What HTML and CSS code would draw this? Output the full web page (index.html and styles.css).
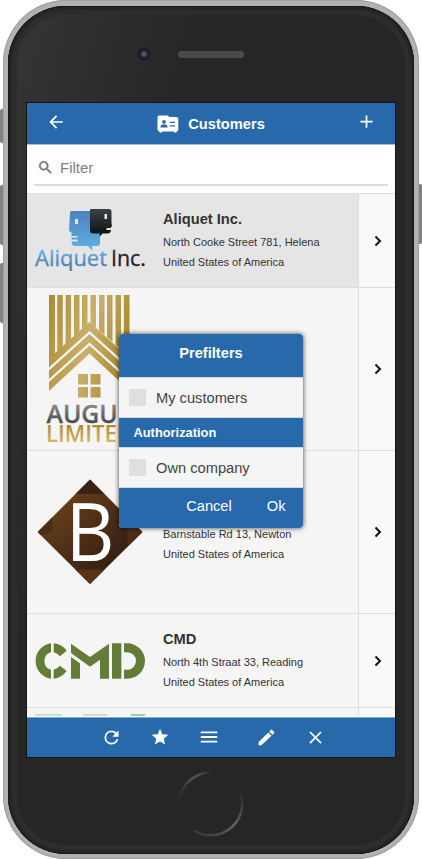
FILE: index.html
```html
<!DOCTYPE html>
<html lang="en">
<head>
<meta charset="utf-8">
<title>Customers</title>
<link rel="stylesheet" href="styles.css">
</head>
<body>
<div class="device">
  <i class="side mute"></i><i class="side vol-up"></i><i class="side vol-down"></i><i class="side power"></i>
  <div class="shell">
    <div class="face">
      <div class="top-bezel"><span class="camera"></span><span class="speaker"></span></div>
      <main class="screen">
        <header class="bar">
          <svg class="back" width="20" height="20" viewBox="0 0 24 24"><path d="M20 11H7.830l5.590-5.590L12 4l-8 8 8 8 1.410-1.410L7.830 13H20v-2z"/></svg>
          <h1>
            <svg width="22" height="18" viewBox="0 0 22 18"><path fill-rule="evenodd" d="M2 .5h8.500a1.500 1.500 0 0 1 1.500 1.500h7.500a1.800 1.800 0 0 1 1.800 1.800V14.500a2 2 0 0 1-1.500 2l-.6 1h-2l-.7-1H5.500l-.7 1h-2l-.6-1A2 2 0 0 1 .5 14.500V2A1.500 1.500 0 0 1 2 .5zM7 5a1.900 1.900 0 1 0 .01 0zM3.500 12.400h7v-1c0-1.400-2-2.100-3.500-2.100s-3.500.7-3.500 2.100zM13 6.800V8h5V6.800zM13 10.300v1.200h5v-1.200z"/></svg>
            Customers
          </h1>
          <svg class="add" width="21" height="21" viewBox="0 0 24 24"><path d="M19 13h-6v6h-2v-6H5v-2h6V5h2v6h6v2z"/></svg>
        </header>
        <div class="search">
          <div class="field">
            <svg width="17" height="17" viewBox="0 0 24 24"><path d="M15.500 14h-.79l-.28-.27A6.470 6.470 0 0 0 16 9.500 6.500 6.500 0 1 0 9.500 16c1.610 0 3.090-.59 4.230-1.570l.27.28v.79l5 4.990L20.490 19l-4.990-5zm-6 0C7.010 14 5 11.990 5 9.500S7.010 5 9.500 5 14 7.010 14 9.500 11.990 14 9.500 14z"/></svg>
            <span>Filter</span>
          </div>
        </div>
        <section class="list">
          <article class="row small selected">
            <div class="logo lifted">
              <svg width="112" height="66" viewBox="0 0 112 66">
                <defs>
                  <linearGradient id="sky" x1="0" y1="0" x2="0" y2="1"><stop offset="0" stop-color="#4d82bb"/><stop offset="1" stop-color="#5fb1e6"/></linearGradient>
                  <linearGradient id="word" x1="0" y1="0" x2="0" y2="1"><stop offset=".2" stop-color="#68b9ed"/><stop offset=".85" stop-color="#4676ad"/></linearGradient>
                  <linearGradient id="ink" x1="0" y1="0" x2="0" y2="1"><stop offset="0" stop-color="#3c4245"/><stop offset="1" stop-color="#0c0e0f"/></linearGradient>
                </defs>
                <path fill="url(#sky)" fill-rule="evenodd" d="M37 6H57v22h9v10q0 3-3 3h-5l.5 5-4.500-5H41.500q-4 0-4-4.500h6V34.500h-6V32.500h6V31h-6v-3.500L35 26l1-18q0-2 1.500-2zM41 14v5h3v-5z"/>
                <path fill="url(#ink)" fill-rule="evenodd" d="M57 4h18q2.500 0 2.500 2.500V18l.5 3-1.500 2h-4v2h4.500q0 3.500-4 3.500h-4.500L66 31.500l-.5-3H59q-3 0-3-3V5q0-1 1-1zM70.500 9v5H73V9z"/>
                <text class="open" x="1" y="61" font-size="22" stroke-width=".3" stroke="url(#word)" fill="url(#word)" textLength="72" lengthAdjust="spacingAndGlyphs">Aliquet</text>
                <text class="open" x="77" y="61" font-size="22" stroke-width=".3" stroke="url(#ink)" fill="url(#ink)" textLength="35" lengthAdjust="spacingAndGlyphs">Inc.</text>
              </svg>
            </div>
            <div class="info"><h2>Aliquet Inc.</h2><p>North Cooke Street 781, Helena</p><p>United States of America</p></div>
            <div class="go"><svg width="20" height="20" viewBox="0 0 20 20"><path d="M7.500 5.500l4.500 4.500-4.500 4.500"/></svg></div>
          </article>
          <article class="row">
            <div class="logo">
              <svg width="112" height="156" viewBox="0 0 112 156">
                <defs>
                  <linearGradient id="gold" gradientUnits="userSpaceOnUse" x1="14" y1="0" x2="96" y2="20"><stop offset="0" stop-color="#aa8a2f"/><stop offset=".6" stop-color="#c9b06c"/><stop offset="1" stop-color="#ae8f38"/></linearGradient>
                  <linearGradient id="limit" x1="0" y1="0" x2="0" y2="1"><stop offset=".2" stop-color="#a9862c"/><stop offset=".8" stop-color="#d3ba6c"/></linearGradient>
                  <linearGradient id="steel" x1="0" y1="0" x2="0" y2="1"><stop offset=".2" stop-color="#8f9393"/><stop offset=".8" stop-color="#43484a"/></linearGradient>
                  <clipPath id="above"><path d="M0 0h112v80L55.500 31 0 83z"/></clipPath>
                </defs>
                <g fill="url(#gold)">
                  <path clip-path="url(#above)" d="M15 4h6v80h-6zM23.300 4h5.500v80h-5.500zM31.600 4h5.500v80h-5.500zM40 4h5.500v80H40zM48 4h5.500v80H48zM56.500 4H62v80h-5.500zM65 4h5.500v80H65zM73 4h5.500v80H73zM81.500 4H87v80h-5.500zM89.800 4h5.700v80h-5.700z"/>
                  <path d="M15 67.500L55.500 31 96 67.500v9L55.500 40 15 76.500zM15 79.500L55.500 43 96 79.500v8.500L55.500 51.500 15 88zM15 91L55.500 54.500 96 91v9L55.500 62.500 15 100z"/>
                  <path d="M44 83h10v10.500H44zM56.500 83h10v10.500h-10zM44 96h10v10.500H44zM56.500 96h10v10.500h-10z"/>
                </g>
                <text class="open semi" x="12.500" y="132" font-size="26" stroke="url(#steel)" stroke-width=".3" fill="url(#steel)" textLength="85" lengthAdjust="spacingAndGlyphs">AUGUE</text>
                <text class="open semi" x="12" y="151" font-size="23" fill="url(#limit)" textLength="87" lengthAdjust="spacingAndGlyphs">LIMITED</text>
              </svg>
            </div>
            <div class="info"></div>
            <div class="go"><svg width="20" height="20" viewBox="0 0 20 20"><path d="M7.500 5.500l4.500 4.500-4.500 4.500"/></svg></div>
          </article>
          <article class="row">
            <div class="logo">
              <svg width="112" height="106" viewBox="-.5 0 112 106">
                <defs>
                  <linearGradient id="wood" x1="0" y1="0" x2="1" y2="1"><stop offset=".25" stop-color="#633d18"/><stop offset=".75" stop-color="#352015"/></linearGradient>
                  <clipPath id="gem"><path d="M55.500 0.500L108 53 55.500 105 3 53z"/></clipPath>
                </defs>
                <g clip-path="url(#gem)">
                  <path fill="url(#wood)" d="M0 0h112v106H0z"/>
                  <path fill="#3a2315" d="M38 0h36v15H38z"/>
                  <path fill="#3a2315" opacity=".55" d="M0 36h18v17L0 58z"/>
                  <path fill="#573414" d="M38 90.500h36V106H38z"/>
                  <path fill="#4c2d15" d="M93 40h19v26H93z"/>
                </g>
                <text class="open" transform="translate(31.300 82) scale(.93 1)" font-size="81" fill="#fff">B</text>
              </svg>
            </div>
            <div class="info"><h2>&nbsp;</h2><p>Barnstable Rd 13, Newton</p><p>United States of America</p></div>
            <div class="go"><svg width="20" height="20" viewBox="0 0 20 20"><path d="M7.500 5.500l4.500 4.500-4.500 4.500"/></svg></div>
          </article>
          <article class="row small">
            <div class="logo">
              <svg width="112" height="36" viewBox="42 128 336 108">
                <path fill="#657c38" d="M93 129v27a27 27 0 0 0 0 52v27a53.500 53.500 0 0 1 0-106zM101 129q24 2 39 22l-20 17q-7-9-19-12zM101 235q24-2 39-23l-20-16q-7 9-19 12zM153 130l57 40 57-40v105h-27v-57l-30 21-57-41zM153 170l27 19v46h-27zM276 129h28v106h-28zM312 129h10a53 53 0 0 1 0 106h-10v-27h10a26 26 0 0 0 0-52h-10z"/>
              </svg>
            </div>
            <div class="info"><h2>CMD</h2><p>North 4th Straat 33, Reading</p><p>United States of America</p></div>
            <div class="go"><svg width="20" height="20" viewBox="0 0 20 20"><path d="M7.500 5.500l4.500 4.500-4.500 4.500"/></svg></div>
          </article>
          <article class="row peek">
            <div class="logo"><i class="mint"></i><i class="sand"></i><i class="leaf"></i></div>
            <div class="info"></div>
            <div class="go"></div>
          </article>
        </section>
        <footer class="tools">
          <svg width="21" height="21" viewBox="0 0 24 24"><path d="M17.650 6.350A7.960 7.960 0 0 0 12 4a8 8 0 1 0 7.730 10h-2.080A6 6 0 1 1 12 6c1.660 0 3.140.69 4.220 1.780L13 11h7V4l-2.350 2.350z"/></svg>
          <svg width="20" height="20" viewBox="0 0 24 24"><path d="M12 17.270L18.180 21l-1.640-7.030L22 9.240l-7.190-.61L12 2 9.190 8.630 2 9.240l5.460 4.730L5.820 21z"/></svg>
          <svg width="22" height="22" viewBox="0 0 24 24"><path d="M3 18h18v-2H3v2zm0-5h18v-2H3v2zm0-7v2h18V6H3z"/></svg>
          <svg class="edit" width="21" height="21" viewBox="0 0 24 24"><path d="M3 18.500v1.500q0 1 1 1h1.800L17.810 9.940l-3.750-3.750L3 17.250zM20.710 7.040a1 1 0 0 0 0-1.410l-2.340-2.340a1 1 0 0 0-1.410 0l-1.830 1.830 3.750 3.750 1.830-1.830z"/></svg>
          <svg width="21" height="21" viewBox="0 0 24 24"><path d="M19 6.410L17.590 5 12 10.590 6.410 5 5 6.410 10.590 12 5 17.590 6.410 19 12 13.410 17.590 19 19 17.590 13.410 12z"/></svg>
        </footer>
        <div class="dialog">
          <h3>Prefilters</h3>
          <label><i></i>My customers</label>
          <h4>Authorization</h4>
          <label><i></i>Own company</label>
          <div class="actions"><span>Cancel</span><span>Ok</span></div>
        </div>
      </main>
      <div class="bottom-bezel">
        <svg width="66" height="66" viewBox="0 0 66 66">
          <defs>
            <linearGradient id="arcA" x1="1" y1="0" x2="0" y2="1"><stop offset=".1" stop-color="#777" stop-opacity="0"/><stop offset=".4" stop-color="#555"/><stop offset=".9" stop-color="#444" stop-opacity="0"/></linearGradient>
            <linearGradient id="arcB" x1="1" y1="0" x2="0" y2="1"><stop offset="0" stop-color="#555" stop-opacity="0"/><stop offset=".45" stop-color="#6a6a6a"/><stop offset="1" stop-color="#555" stop-opacity=".3"/></linearGradient>
          </defs>
          <path stroke="url(#arcA)" d="M2 40A31.500 31.500 0 0 1 42 2.800"/>
          <path stroke="url(#arcB)" d="M61 19A31.500 31.500 0 0 1 16 59.500"/>
        </svg>
      </div>
    </div>
  </div>
</div>
</body>
</html>
```

FILE: styles.css
```css
* { box-sizing: border-box; }
body {
  margin: 0;
  background: #fff;
  font-family: "Liberation Sans", Arial, sans-serif;
  color: #333;
  overflow: hidden;
}
h1, h2, h3, h4, p { margin: 0; }
svg { display: block; flex: none; }
.open { font-family: "Open Sans", "Noto Sans", sans-serif; }
.semi { font-weight: 600; }

/* Phone */
.device { position: relative; width: 422px; height: 859px; padding: 0 3px; }
.side { position: absolute; width: 4px; background: #828286; }
.mute { left: 0; top: 109px; height: 34px; border-radius: 2px 0 0 2px; }
.vol-up { left: 0; top: 185px; height: 60px; border-radius: 2px 0 0 2px; }
.vol-down { left: 0; top: 263px; height: 60px; border-radius: 2px 0 0 2px; }
.power { right: 0; top: 184px; height: 60px; border-radius: 0 2px 2px 0; }
.shell {
  position: relative;
  height: 859px;
  padding: 6px 5px 5px;
  border-radius: 63px;
  background: #b1b1b1;
  box-shadow: inset 0 0 0 1px #a0a0a0;
}
.face {
  height: 848px;
  padding: 97px 19px 0;
  border-radius: 58px;
  background: linear-gradient(105deg, #363636 0, #262626 31%, #262626 100%);
  box-shadow: inset 0 0 0 1px #181818, inset 0 0 0 4px #262626, inset 0 0 0 9px #2d2d2d;
}
.top-bezel {
  height: 14px;
  margin: -56px 0 42px;
  display: flex;
  align-items: center;
}
.camera {
  width: 14px;
  height: 14px;
  margin-left: 110px;
  border-radius: 50%;
  background: radial-gradient(circle, #75648a 0 1px, #3b3150 2px 3px, #1c1c1f 4.5px 6px, #2b2b2b 7px);
}
.speaker {
  width: 66px;
  height: 7px;
  margin-left: 27px;
  border-radius: 4px;
  background: repeating-conic-gradient(#3e3e3e 0 25%, #575757 0 50%) 0 0 / 2px 2px;
}
.bottom-bezel { display: flex; justify-content: center; padding-top: 14px; }
.bottom-bezel path { fill: none; stroke-width: 2.5; }

/* Application */
.screen {
  position: relative;
  width: 368px;
  height: 654px;
  display: flex;
  flex-direction: column;
  background: #fff;
  box-shadow: 0 0 0 1px #151515;
}
.bar {
  height: 42px;
  flex: none;
  display: flex;
  align-items: center;
  justify-content: space-between;
  padding: 0 18px 0 19px;
  border-bottom: 1px solid #a3c0dc;
  background: #2769aa;
  color: #fff;
}
.bar svg { fill: #fff; }
.back, .add { margin-top: -4px; }
.bar h1 { display: flex; align-items: center; gap: 9px; font-size: 14.67px; padding-top: 1px; }
.search { height: 48px; flex: none; padding: 7px 7px 0; }
.field {
  height: 34px;
  display: flex;
  align-items: center;
  gap: 6px;
  padding: 0 0 2px 3px;
  border-bottom: 2px solid #dcdcdc;
  color: #808080;
  font-size: 15px;
}
.field svg { fill: #777; stroke: #777; stroke-width: .7; margin-top: 1px; }
.list { flex: 1; min-height: 0; overflow: hidden; border-top: 1px solid #ddd; }
.row {
  height: 163px;
  display: grid;
  grid-template-columns: 128px 203px 37px;
  border-bottom: 1px solid #dedede;
  background: #f5f5f5;
}
.row.small { height: 94px; }
.row.selected { background: #e5e5e5; }
.logo { display: flex; align-items: center; padding-left: 7px; }
.logo.lifted { padding-bottom: 5px; }
.info { display: flex; flex-direction: column; justify-content: center; padding: 0 0 1px 8px; white-space: nowrap; }
.info h2 { margin-bottom: 2px; font-size: 14.67px; line-height: 22px; }
.info p { font-size: 11px; line-height: 20px; }
.go { display: flex; align-items: center; justify-content: center; padding-left: 1px; border-left: 1px solid #dedede; background: #f9f9f9; }
.go path { fill: none; stroke: #111; stroke-width: 2; }
.row.peek { height: 8px; border-bottom: 0; }
.peek .logo { align-items: flex-end; padding-left: 8px; }
.peek .logo i { height: 2px; }
.mint { width: 27px; background: #bfe3cf; }
.sand { width: 24px; margin-left: 21px; background: #dfd6c5; }
.leaf { width: 14px; margin-left: 24px; background: #93d0b0; }
.tools {
  height: 40px;
  flex: none;
  margin-top: 1px;
  display: flex;
  align-items: center;
  justify-content: center;
  gap: 28px;
  padding: 0 0 1px 4px;
  border-top: 1px solid #7fa8cf;
  background: #2769aa;
}
.tools svg { fill: #fff; }
.tools .edit { margin-left: 8px; }

/* Prefilter dialog */
.dialog {
  position: absolute;
  left: 92px;
  top: 231px;
  width: 184px;
  border-radius: 4px;
  overflow: hidden;
  background: #f5f5f5;
  box-shadow: 0 0 5px rgba(0, 0, 0, .75);
  font-size: 14.67px;
}
.dialog h3 { height: 43px; padding-bottom: 5px; background: #2769aa; color: #fff; font-size: 14.67px; line-height: 38px; text-align: center; }
.dialog label { height: 41px; display: flex; align-items: center; gap: 10px; padding-left: 10px; border: solid #cfd6dd; border-width: 1px 0; color: #444; }
.dialog label i { width: 17px; height: 17px; background: #dfdfdf; }
.dialog h4 { height: 29px; padding-left: 14.500px; background: #2769aa; color: #fff; font-size: 12.85px; line-height: 29px; }
.actions { height: 40px; display: flex; justify-content: flex-end; gap: 35px; padding: 0 17.500px 3px 0; background: #2769aa; color: #fff; line-height: 37px; }
```
